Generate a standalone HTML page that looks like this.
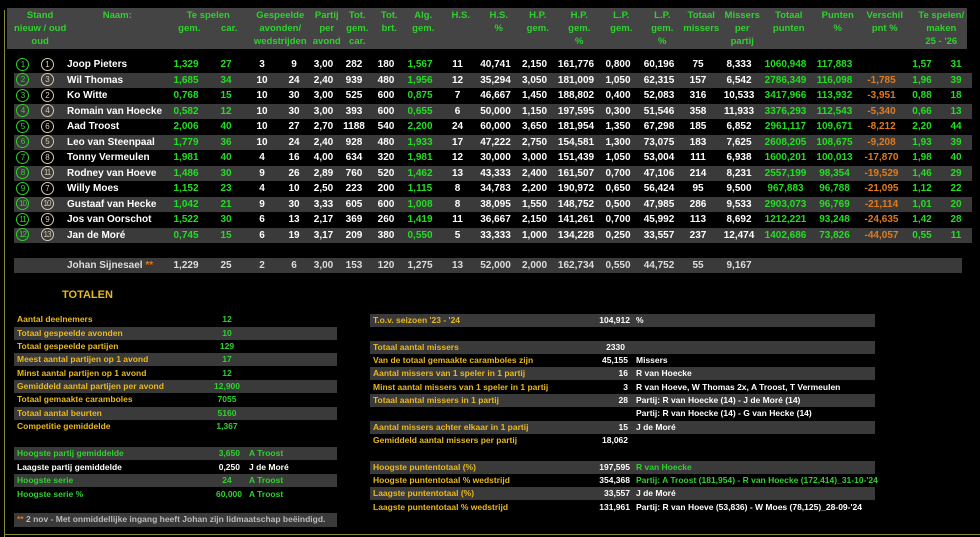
<!DOCTYPE html>
<html><head><meta charset="utf-8"><style>
*{margin:0;padding:0;box-sizing:border-box}
body{width:980px;height:537px;background:#000;position:relative;overflow:hidden;font-family:"Liberation Sans",sans-serif;font-weight:bold;font-size:10px;color:#fff}
.lb{position:absolute;left:4px;top:10px;width:1px;height:527px;background:#8a8a30}
.bb{position:absolute;left:4px;top:534px;width:976px;height:1px;background:#8a8a30}
.hdr{position:absolute;left:7px;top:8px;width:960px;height:41px;background:#444}
table{border-collapse:collapse;table-layout:fixed;position:absolute}
td{text-align:center;white-space:nowrap;overflow:visible;padding:0}
#h{left:14px;top:9px;color:#2fd12f;font-size:9.5px}
#h td{height:13px;line-height:13px;vertical-align:top}
#d{left:14px;top:57px}
#d td{height:15.5px;line-height:15.5px}
#d tr:nth-child(even){background:#3a3a3a}
.n{text-align:left;padding-left:4px}
.g{color:#22dd22}
.o{color:#e07a20}
.c{display:inline-block;width:13px;height:13px;border:1px solid #2fd12f;border-radius:50%;color:#2fd12f;font-size:8px;line-height:11px;text-align:center;vertical-align:middle;letter-spacing:-1px;font-weight:normal}
.c2{border-color:#d8c8b0;color:#d8c8b0}
.js{position:absolute;left:14px;top:258px;width:948px;height:15px;background:#3a3a3a}
#j{left:14px;top:258px;color:#ddd}
#j td{height:15px;line-height:15px}
.r{position:absolute;height:13.4px;line-height:13.4px;white-space:nowrap;font-size:8.5px}
.bar{background:#3a3a3a}
.y{color:#e8b820}
.gr{color:#2fd12f}
.w{color:#fff}
</style></head><body>
<div class="lb"></div><div class="bb"></div>
<div class="hdr"></div>
<table id="h"><colgroup><col style="width:49px"><col style="width:102px"><col style="width:42px"><col style="width:38px"><col style="width:34px"><col style="width:30px"><col style="width:29px"><col style="width:32px"><col style="width:32px"><col style="width:36px"><col style="width:39px"><col style="width:37px"><col style="width:41px"><col style="width:42px"><col style="width:42px"><col style="width:40px"><col style="width:38px"><col style="width:44px"><col style="width:49px"><col style="width:49px"><col style="width:45px"><col style="width:68px"></colgroup>
<tr><td>Stand</td><td>Naam:</td><td colspan="2">Te spelen</td><td colspan="2">Gespeelde</td><td>Partij</td><td>Tot.</td><td>Tot.</td><td>Alg.</td><td>H.S.</td><td>H.S.</td><td>H.P.</td><td>H.P.</td><td>L.P.</td><td>L.P.</td><td>Totaal</td><td>Missers</td><td>Totaal</td><td>Punten</td><td>Verschil</td><td>Te spelen/</td></tr>
<tr><td>nieuw / oud</td><td></td><td>gem.</td><td>car.</td><td colspan="2">avonden/</td><td>per</td><td>gem.</td><td>brt.</td><td>gem.</td><td></td><td>%</td><td>gem.</td><td>gem.</td><td>gem.</td><td>gem.</td><td>missers</td><td>per</td><td>punten</td><td>%</td><td>pnt %</td><td>maken</td></tr>
<tr><td>oud</td><td></td><td></td><td></td><td colspan="2">wedstrijden</td><td>avond</td><td>car.</td><td></td><td></td><td></td><td></td><td></td><td>%</td><td></td><td>%</td><td></td><td>partij</td><td></td><td></td><td></td><td>25 - '26</td></tr>
</table>
<table id="d"><colgroup><col style="width:17px"><col style="width:32px"><col style="width:102px"><col style="width:42px"><col style="width:38px"><col style="width:34px"><col style="width:30px"><col style="width:29px"><col style="width:32px"><col style="width:32px"><col style="width:36px"><col style="width:39px"><col style="width:37px"><col style="width:41px"><col style="width:42px"><col style="width:42px"><col style="width:40px"><col style="width:38px"><col style="width:44px"><col style="width:49px"><col style="width:49px"><col style="width:45px"><col style="width:36px"><col style="width:32px"></colgroup>
<tr><td><span class="c">1</span></td><td><span class="c c2">1</span></td><td class="n">Joop Pieters</td><td class="g">1,329</td><td class="g">27</td><td>3</td><td>9</td><td>3,00</td><td>282</td><td>180</td><td class="g">1,567</td><td>11</td><td>40,741</td><td>2,150</td><td>161,776</td><td>0,800</td><td>60,196</td><td>75</td><td>8,333</td><td class="g">1060,948</td><td class="g">117,883</td><td></td><td class="g">1,57</td><td class="g">31</td></tr>
<tr><td><span class="c">2</span></td><td><span class="c c2">3</span></td><td class="n">Wil Thomas</td><td class="g">1,685</td><td class="g">34</td><td>10</td><td>24</td><td>2,40</td><td>939</td><td>480</td><td class="g">1,956</td><td>12</td><td>35,294</td><td>3,050</td><td>181,009</td><td>1,050</td><td>62,315</td><td>157</td><td>6,542</td><td class="g">2786,349</td><td class="g">116,098</td><td class="o">-1,785</td><td class="g">1,96</td><td class="g">39</td></tr>
<tr><td><span class="c">3</span></td><td><span class="c c2">2</span></td><td class="n">Ko Witte</td><td class="g">0,768</td><td class="g">15</td><td>10</td><td>30</td><td>3,00</td><td>525</td><td>600</td><td class="g">0,875</td><td>7</td><td>46,667</td><td>1,450</td><td>188,802</td><td>0,400</td><td>52,083</td><td>316</td><td>10,533</td><td class="g">3417,966</td><td class="g">113,932</td><td class="o">-3,951</td><td class="g">0,88</td><td class="g">18</td></tr>
<tr><td><span class="c">4</span></td><td><span class="c c2">4</span></td><td class="n">Romain van Hoecke</td><td class="g">0,582</td><td class="g">12</td><td>10</td><td>30</td><td>3,00</td><td>393</td><td>600</td><td class="g">0,655</td><td>6</td><td>50,000</td><td>1,150</td><td>197,595</td><td>0,300</td><td>51,546</td><td>358</td><td>11,933</td><td class="g">3376,293</td><td class="g">112,543</td><td class="o">-5,340</td><td class="g">0,66</td><td class="g">13</td></tr>
<tr><td><span class="c">5</span></td><td><span class="c c2">6</span></td><td class="n">Aad Troost</td><td class="g">2,006</td><td class="g">40</td><td>10</td><td>27</td><td>2,70</td><td>1188</td><td>540</td><td class="g">2,200</td><td>24</td><td>60,000</td><td>3,650</td><td>181,954</td><td>1,350</td><td>67,298</td><td>185</td><td>6,852</td><td class="g">2961,117</td><td class="g">109,671</td><td class="o">-8,212</td><td class="g">2,20</td><td class="g">44</td></tr>
<tr><td><span class="c">6</span></td><td><span class="c c2">5</span></td><td class="n">Leo van Steenpaal</td><td class="g">1,779</td><td class="g">36</td><td>10</td><td>24</td><td>2,40</td><td>928</td><td>480</td><td class="g">1,933</td><td>17</td><td>47,222</td><td>2,750</td><td>154,581</td><td>1,300</td><td>73,075</td><td>183</td><td>7,625</td><td class="g">2608,205</td><td class="g">108,675</td><td class="o">-9,208</td><td class="g">1,93</td><td class="g">39</td></tr>
<tr><td><span class="c">7</span></td><td><span class="c c2">8</span></td><td class="n">Tonny Vermeulen</td><td class="g">1,981</td><td class="g">40</td><td>4</td><td>16</td><td>4,00</td><td>634</td><td>320</td><td class="g">1,981</td><td>12</td><td>30,000</td><td>3,000</td><td>151,439</td><td>1,050</td><td>53,004</td><td>111</td><td>6,938</td><td class="g">1600,201</td><td class="g">100,013</td><td class="o">-17,870</td><td class="g">1,98</td><td class="g">40</td></tr>
<tr><td><span class="c">8</span></td><td><span class="c c2">11</span></td><td class="n">Rodney van Hoeve</td><td class="g">1,486</td><td class="g">30</td><td>9</td><td>26</td><td>2,89</td><td>760</td><td>520</td><td class="g">1,462</td><td>13</td><td>43,333</td><td>2,400</td><td>161,507</td><td>0,700</td><td>47,106</td><td>214</td><td>8,231</td><td class="g">2557,199</td><td class="g">98,354</td><td class="o">-19,529</td><td class="g">1,46</td><td class="g">29</td></tr>
<tr><td><span class="c">9</span></td><td><span class="c c2">7</span></td><td class="n">Willy Moes</td><td class="g">1,152</td><td class="g">23</td><td>4</td><td>10</td><td>2,50</td><td>223</td><td>200</td><td class="g">1,115</td><td>8</td><td>34,783</td><td>2,200</td><td>190,972</td><td>0,650</td><td>56,424</td><td>95</td><td>9,500</td><td class="g">967,883</td><td class="g">96,788</td><td class="o">-21,095</td><td class="g">1,12</td><td class="g">22</td></tr>
<tr><td><span class="c">10</span></td><td><span class="c c2">10</span></td><td class="n">Gustaaf van Hecke</td><td class="g">1,042</td><td class="g">21</td><td>9</td><td>30</td><td>3,33</td><td>605</td><td>600</td><td class="g">1,008</td><td>8</td><td>38,095</td><td>1,550</td><td>148,752</td><td>0,500</td><td>47,985</td><td>286</td><td>9,533</td><td class="g">2903,073</td><td class="g">96,769</td><td class="o">-21,114</td><td class="g">1,01</td><td class="g">20</td></tr>
<tr><td><span class="c">11</span></td><td><span class="c c2">9</span></td><td class="n">Jos van Oorschot</td><td class="g">1,522</td><td class="g">30</td><td>6</td><td>13</td><td>2,17</td><td>369</td><td>260</td><td class="g">1,419</td><td>11</td><td>36,667</td><td>2,150</td><td>141,261</td><td>0,700</td><td>45,992</td><td>113</td><td>8,692</td><td class="g">1212,221</td><td class="g">93,248</td><td class="o">-24,635</td><td class="g">1,42</td><td class="g">28</td></tr>
<tr><td><span class="c">12</span></td><td><span class="c c2">13</span></td><td class="n">Jan de Moré</td><td class="g">0,745</td><td class="g">15</td><td>6</td><td>19</td><td>3,17</td><td>209</td><td>380</td><td class="g">0,550</td><td>5</td><td>33,333</td><td>1,000</td><td>134,228</td><td>0,250</td><td>33,557</td><td>237</td><td>12,474</td><td class="g">1402,686</td><td class="g">73,826</td><td class="o">-44,057</td><td class="g">0,55</td><td class="g">11</td></tr>
</table>
<div class="js"></div>
<table id="j"><colgroup><col style="width:17px"><col style="width:32px"><col style="width:102px"><col style="width:42px"><col style="width:38px"><col style="width:34px"><col style="width:30px"><col style="width:29px"><col style="width:32px"><col style="width:32px"><col style="width:36px"><col style="width:39px"><col style="width:37px"><col style="width:41px"><col style="width:42px"><col style="width:42px"><col style="width:40px"><col style="width:38px"><col style="width:44px"></colgroup>
<tr><td></td><td></td><td class="n">Johan Sijnesael <span class="o">**</span></td><td>1,229</td><td>25</td><td>2</td><td>6</td><td>3,00</td><td>153</td><td>120</td><td>1,275</td><td>13</td><td>52,000</td><td>2,000</td><td>162,734</td><td>0,550</td><td>44,752</td><td>55</td><td>9,167</td></tr></table>

<div class="r y" style="left:62px;top:289px;font-size:11px">TOTALEN</div>

<div class="r y" style="left:14px;top:313px;width:323px;padding-left:3px">Aantal deelnemers</div><div class="r gr" style="left:200px;top:313px;width:54px;text-align:center">12</div>
<div class="r y bar" style="left:14px;top:327px;width:323px;padding-left:3px">Totaal gespeelde avonden</div><div class="r gr" style="left:200px;top:327px;width:54px;text-align:center">10</div>
<div class="r y" style="left:14px;top:340px;width:323px;padding-left:3px">Totaal gespeelde partijen</div><div class="r gr" style="left:200px;top:340px;width:54px;text-align:center">129</div>
<div class="r y bar" style="left:14px;top:353px;width:323px;padding-left:3px">Meest aantal partijen op 1 avond</div><div class="r gr" style="left:200px;top:353px;width:54px;text-align:center">17</div>
<div class="r y" style="left:14px;top:367px;width:323px;padding-left:3px">Minst aantal partijen op 1 avond</div><div class="r gr" style="left:200px;top:367px;width:54px;text-align:center">12</div>
<div class="r y bar" style="left:14px;top:380px;width:323px;padding-left:3px">Gemiddeld aantal partijen per avond</div><div class="r gr" style="left:200px;top:380px;width:54px;text-align:center">12,900</div>
<div class="r y" style="left:14px;top:393px;width:323px;padding-left:3px">Totaal gemaakte caramboles</div><div class="r gr" style="left:200px;top:393px;width:54px;text-align:center">7055</div>
<div class="r y bar" style="left:14px;top:407px;width:323px;padding-left:3px">Totaal aantal beurten</div><div class="r gr" style="left:200px;top:407px;width:54px;text-align:center">5160</div>
<div class="r y" style="left:14px;top:420px;width:323px;padding-left:3px">Competitie gemiddelde</div><div class="r gr" style="left:200px;top:420px;width:54px;text-align:center">1,367</div>

<div class="r gr bar" style="left:14px;top:447px;width:323px;padding-left:3px">Hoogste partij gemiddelde</div><div class="r gr" style="left:200px;top:447px;width:40px;text-align:right">3,650</div><div class="r gr" style="left:249px;top:447px">A Troost</div>
<div class="r w" style="left:14px;top:461px;width:323px;padding-left:3px">Laagste partij gemiddelde</div><div class="r w" style="left:200px;top:461px;width:40px;text-align:right">0,250</div><div class="r w" style="left:249px;top:461px">J de Moré</div>
<div class="r gr bar" style="left:14px;top:474px;width:323px;padding-left:3px">Hoogste serie</div><div class="r gr" style="left:200px;top:474px;width:54px;text-align:center">24</div><div class="r gr" style="left:249px;top:474px">A Troost</div>
<div class="r gr" style="left:14px;top:488px;width:323px;padding-left:3px">Hoogste serie %</div><div class="r gr" style="left:200px;top:488px;width:42px;text-align:right">60,000</div><div class="r gr" style="left:249px;top:488px">A Troost</div>
<div class="r bar" style="left:14px;top:513px;width:323px;height:14px;padding-left:3px;color:#bbb;font-size:8.5px"><span class="o">**</span> 2 nov - Met onmiddellijke ingang heeft Johan zijn lidmaatschap beëindigd.</div>

<div class="r y bar" style="left:370px;top:314px;width:505px;padding-left:3px">T.o.v. seizoen '23 - '24</div><div class="r w" style="left:580px;top:314px;width:50px;text-align:right">104,912</div><div class="r w" style="left:636px;top:314px">%</div>
<div class="r y bar" style="left:370px;top:341px;width:505px;padding-left:3px">Totaal aantal missers</div><div class="r w" style="left:580px;top:341px;width:45px;text-align:right">2330</div>
<div class="r y" style="left:370px;top:354px;width:505px;padding-left:3px">Van de totaal gemaakte caramboles zijn</div><div class="r w" style="left:580px;top:354px;width:48px;text-align:right">45,155</div><div class="r w" style="left:636px;top:354px">Missers</div>
<div class="r y bar" style="left:370px;top:367px;width:505px;padding-left:3px">Aantal missers van 1 speler in 1 partij</div><div class="r w" style="left:580px;top:367px;width:48px;text-align:right">16</div><div class="r w" style="left:636px;top:367px">R van Hoecke</div>
<div class="r y" style="left:370px;top:381px;width:505px;padding-left:3px">Minst aantal missers van 1 speler in 1 partij</div><div class="r w" style="left:580px;top:381px;width:48px;text-align:right">3</div><div class="r w" style="left:636px;top:381px">R van Hoeve, W Thomas 2x, A Troost, T Vermeulen</div>
<div class="r y bar" style="left:370px;top:394px;width:505px;padding-left:3px">Totaal aantal missers in 1 partij</div><div class="r w" style="left:580px;top:394px;width:48px;text-align:right">28</div><div class="r w" style="left:636px;top:394px">Partij: R van Hoecke (14) - J de Moré (14)</div>
<div class="r w" style="left:636px;top:407px">Partij: R van Hoecke (14) - G van Hecke (14)</div>
<div class="r y bar" style="left:370px;top:421px;width:505px;padding-left:3px">Aantal missers achter elkaar in 1 partij</div><div class="r w" style="left:580px;top:421px;width:48px;text-align:right">15</div><div class="r w" style="left:636px;top:421px">J de Moré</div>
<div class="r y" style="left:370px;top:434px;width:505px;padding-left:3px">Gemiddeld aantal missers per partij</div><div class="r w" style="left:580px;top:434px;width:48px;text-align:right">18,062</div>
<div class="r y bar" style="left:370px;top:461px;width:505px;padding-left:3px">Hoogste puntentotaal (%)</div><div class="r w" style="left:580px;top:461px;width:50px;text-align:right">197,595</div><div class="r gr" style="left:636px;top:461px">R van Hoecke</div>
<div class="r y" style="left:370px;top:474px;width:505px;padding-left:3px">Hoogste puntentotaal % wedstrijd</div><div class="r w" style="left:580px;top:474px;width:50px;text-align:right">354,368</div><div class="r gr" style="left:636px;top:474px">Partij: A Troost (181,954) - R van Hoecke (172,414)_31-10-'24</div>
<div class="r y bar" style="left:370px;top:487px;width:505px;padding-left:3px">Laagste puntentotaal (%)</div><div class="r w" style="left:580px;top:487px;width:50px;text-align:right">33,557</div><div class="r w" style="left:636px;top:487px">J de Moré</div>
<div class="r y" style="left:370px;top:501px;width:505px;padding-left:3px">Laagste puntentotaal % wedstrijd</div><div class="r w" style="left:580px;top:501px;width:50px;text-align:right">131,961</div><div class="r w" style="left:636px;top:501px">Partij: R van Hoeve (53,836) - W Moes (78,125)_28-09-'24</div>
</body></html>
